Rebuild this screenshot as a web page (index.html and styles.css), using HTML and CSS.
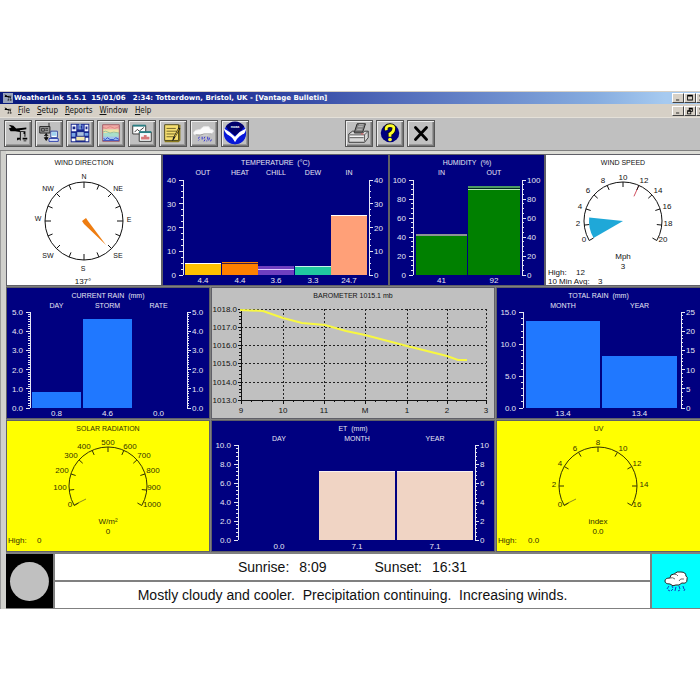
FILE: index.html
```html
<!DOCTYPE html>
<html lang="en">
<head>
<meta charset="utf-8">
<title>WeatherLink 5.5.1</title>
<link rel="stylesheet" href="styles.css">
</head>
<body>
<svg class="defs" aria-hidden="true">
  <symbol id="station" viewBox="0 0 28 27">
    <path d="M4 4l5 1 3 3 11-1v2l-7 1v1h6v1h-5v9h-1v-9l-5-1-5 0-2-3 3-1zM13 18h3v2h-1l-2 1zM19 18h5v2h-5zM20 21h3v1h-3zM20 12h2v5h-1v-3h-1z" fill="#000"/>
  </symbol>
</svg>
<main class="window">
  <header class="titlebar">
    <svg class="app-icon"><use href="#station"/></svg>
    <h1>WeatherLink 5.5.1&nbsp; 15/01/06&nbsp;&nbsp; 2:34: Totterdown, Bristol, UK - [Vantage Bulletin]</h1>
    <div class="controls">
      <button aria-label="Minimize"><svg viewBox="0 0 11 10"><path d="M3 7h4v1H3z"/></svg></button>
      <button aria-label="Maximize"><svg viewBox="0 0 11 10"><path d="M2 1h7v7H2zM3 3v4h5V3z" fill-rule="evenodd"/></svg></button>
      <button aria-label="Close"><svg viewBox="0 0 11 10"><path d="M2 2l6 6M8 2l-6 6" stroke="#000"/></svg></button>
    </div>
  </header>
  <nav class="menubar">
    <svg class="app-icon"><use href="#station"/></svg>
    <a href="#file"><u>F</u>ile</a>
    <a href="#setup"><u>S</u>etup</a>
    <a href="#reports"><u>R</u>eports</a>
    <a href="#window"><u>W</u>indow</a>
    <a href="#help"><u>H</u>elp</a>
    <div class="controls">
      <button aria-label="Minimize bulletin"><svg viewBox="0 0 11 10"><path d="M3 7h4v1H3z"/></svg></button>
      <button aria-label="Restore bulletin"><svg viewBox="0 0 11 10"><path d="M4 1h5v5H7v3H2V4h2zM5 3v1h2v1h1V3zM3 6v2h3V6z" fill-rule="evenodd"/></svg></button>
      <button aria-label="Close bulletin"><svg viewBox="0 0 11 10"><path d="M2 2l6 6M8 2l-6 6" stroke="#000"/></svg></button>
    </div>
  </nav>
  <div class="toolbar">
    <div class="group">
      <button aria-label="Station"><svg viewBox="0 0 28 27"><use href="#station" width="28" height="27"/></svg></button>
      <button aria-label="Download"><svg viewBox="0 0 28 27">
        <path d="M4 6h11v7H4z" fill="#999" stroke="#222"/><path d="M14 2v4" stroke="#222"/>
        <path d="M6 8h3v3H6zM10 8h3M10 10h3" fill="none" stroke="#333"/>
        <path d="M11 13v6M9 16l2-2 2 2M9 18l2 3 2-3z" fill="#111" stroke="#111"/>
        <path d="M16 11h7v7h-7z" fill="#fff" stroke="#223c9b"/><path d="M17 12h5v4h-5z" fill="#9ed2f0"/>
        <path d="M14 19h10v3H14z" fill="#e8eefc" stroke="#2336ac"/>
      </svg></button>
      <button aria-label="Bulletin"><svg viewBox="0 0 28 27">
        <path d="M4 3h20v20H4z" fill="#17268c"/>
        <path d="M5 4h5v7H5zM19 4h4v7h-4z" fill="#f4f6ff"/><path d="M11 4h7v5h-7z" fill="#5a70cc"/>
        <path d="M6 6h3v3H6zM20 6h2v3h-2zM13 5h3v3h-3z" fill="#17268c"/><path d="M14 3v6" stroke="#cfe"/>
        <path d="M5 13h4v4H5zM19 13h4v3h-4z" fill="#78a5e6"/><path d="M11 12h7v4h-7z" fill="#a9c0dd"/>
        <path d="M10 17h9v4h-9z" fill="#f2e7ac"/><path d="M5 19h4v3H5zM20 18h3v4h-3z" fill="#fff"/>
      </svg></button>
      <button aria-label="Strip chart"><svg viewBox="0 0 28 27">
        <path d="M5 4h18v5H5z" fill="#f1aaa5"/><path d="M5 9h18v4H5z" fill="#efe3a5"/>
        <path d="M5 13h18v4H5z" fill="#a8dfcb"/><path d="M5 17h18v5H5z" fill="#9fc2ef"/>
        <path d="M5 7l4 1 4-2 5 2 5-2" fill="none" stroke="#dd8a84"/>
        <path d="M5 12l3-1 5 2 4-1 6 1" fill="none" stroke="#8fc0a0"/>
        <path d="M6 19l2 1 2-2 3 2 4 0 2-2 4 2M5 21h18" fill="none" stroke="#304bc4"/>
        <path d="M5 4h18v18H5z" fill="none" stroke="#a05b66"/>
      </svg></button>
      <button aria-label="Plot"><svg viewBox="0 0 28 27">
        <path d="M4 5h14v9H4z" fill="#fff" stroke="#333"/><path d="M4 5h14" stroke="#287f84" stroke-width="2"/>
        <path d="M6 12l3-3 2 2 5-4" fill="none" stroke="#333"/>
        <path d="M11 12h13v10H11z" fill="#f4fafa" stroke="#333"/><path d="M11 12h13" stroke="#287f84" stroke-width="2"/>
        <path d="M13 20v-3h3v-2h3v2h3v3z" fill="#d77878"/>
      </svg></button>
      <button aria-label="Notes"><svg viewBox="0 0 28 27">
        <path d="M6 4h16v17l-2 2H5V6z" fill="#8a7a1c"/><path d="M5 4h15v17H5z" fill="#f6df70" stroke="#4d4720"/>
        <path d="M7 8h10M7 11h11M7 14h9M7 17h8" stroke="#6a5f25"/>
        <path d="M22 8l-7 12-2 2 1-4 6-11z" fill="#1b1b1b"/><path d="M20 9l-4 8" stroke="#d8b432"/>
      </svg></button>
      <button aria-label="Forecast"><svg viewBox="0 0 28 27">
        <path d="M4 15q-3-2 1-5l5-1q3-4 7-3 3-1 4 3 4 0 3 3-2 3-6 3H9z" fill="#fafafa" stroke="#e2e2e2"/>
        <path d="M5 15q5 1 9-1l8 0" fill="none" stroke="#8f8f8f"/>
        <path d="M9 17l-1 2M12 17v3M15 17l-1 2M18 17v3M20 18l-1 3M9 20l-1 1M15 20l-1 2M22 20l-1 2M17 21v1" stroke="#2a2ad6"/>
      </svg></button>
      <button aria-label="NOAA"><svg viewBox="0 0 28 27">
        <circle cx="14" cy="13" r="12" fill="#0818d8"/><path d="M4 6a12 12 0 0 1 20 0l-3 4-7 6-7-6z" fill="#00006c"/>
        <path d="M2 8l6 4 6 5 5-5 7-4q-1 6-5 9l-7 7q-2-6-6-8-5-3-6-8z" fill="#fff"/>
        <path d="M2 14q7 1 12 9 4-8 12-10-1 12-12 12Q3 24 2 14z" fill="#0818d8"/>
        <text x="14" y="8" class="noaa">noaa</text>
      </svg></button>
    </div>
    <div class="group">
      <button aria-label="Print"><svg viewBox="0 0 28 27">
        <path d="M9 12l3-9h9l-3 9z" fill="#858585" stroke="#222"/><path d="M14 4h5M13 6h5M12 9h5" stroke="#bbb"/>
        <path d="M3 14l4-3h2v2h9l2-2h4v7l-4 5H3z" fill="#d8d8d8" stroke="#333"/>
        <path d="M4 15h16l4-4M20 15v7M4 18h15" fill="none" stroke="#555"/><path d="M4 16h15v1H4z" fill="#fff"/><path d="M16 14h3" stroke="#d55"/>
      </svg></button>
      <button aria-label="Help"><svg viewBox="0 0 28 27">
        <ellipse cx="14" cy="13" rx="10" ry="10" fill="#00007e"/>
        <path d="M10 10q-1-5 4-5t4 4q0 3-4 5v3" fill="none" stroke="#111" stroke-width="5"/>
        <path d="M10 10q-1-5 4-5t4 4q0 3-4 5v3" fill="none" stroke="#ffff28" stroke-width="3"/>
        <circle cx="14" cy="20" r="2" fill="#ffff28"/>
      </svg></button>
      <button aria-label="Exit"><svg viewBox="0 0 28 27"><path d="M8 7l12 13M20 7L8 20" stroke="#000" stroke-width="3" stroke-linecap="round"/></svg></button>
    </div>
  </div>
  <div class="workspace">
    <div class="row row-top">
      <section class="panel white" data-chart="windDirection"><h2>WIND DIRECTION</h2></section>
      <section class="panel navy" data-chart="temperature"><h2>TEMPERATURE&nbsp; (°C)</h2></section>
      <section class="panel navy" data-chart="humidity"><h2>HUMIDITY&nbsp; (%)</h2></section>
      <section class="panel white" data-chart="windSpeed"><h2>WIND SPEED</h2></section>
    </div>
    <div class="row">
      <section class="panel navy" data-chart="currentRain"><h2>CURRENT RAIN&nbsp; (mm)</h2></section>
      <section class="panel gray" data-chart="barometer"><h2>BAROMETER 1015.1 mb</h2></section>
      <section class="panel navy" data-chart="totalRain"><h2>TOTAL RAIN&nbsp; (mm)</h2></section>
    </div>
    <div class="row">
      <section class="panel yellow" data-chart="solar"><h2>SOLAR RADIATION</h2></section>
      <section class="panel navy" data-chart="et"><h2>ET&nbsp; (mm)</h2></section>
      <section class="panel yellow" data-chart="uv"><h2>UV</h2></section>
    </div>
    <footer class="summary">
      <div class="moon"><svg viewBox="0 0 47 54"><circle cx="23.5" cy="27.5" r="19.5" fill="#c0c0c0"/></svg></div>
      <div class="messages">
        <p class="sun"><span>Sunrise:</span><span>8:09</span><span class="set">Sunset:</span><span>16:31</span></p>
        <p>Mostly cloudy and cooler.&nbsp; Precipitation continuing.&nbsp; Increasing winds.</p>
      </div>
      <div class="outlook"><svg viewBox="0 0 48 54">
        <path d="M18 30q-5 0-5-3 0-3 5-3 0-4 4-4 3-3 7-2 5 0 5 4 2 1 1 4 0 4-5 3-3 3-6 2-3 2-6-1z" fill="#fff" stroke="#222"/>
        <path d="M18 24q3-1 5 1M22 20q3 0 4 2M27 27q1-3 5-2" fill="none" stroke="#666"/>
        <path d="M17 32l-2 3M20 32l1 2M21 35l-2 2M24 33l-1 4M27 32l1 3M28 36l-2 1M31 32l1 3M33 35l-1 2M16 36l2 1" fill="none" stroke="#123fc4"/>
      </svg></div>
    </footer>
  </div>
</main>
<script src="charts.js"></script>
</body>
</html>
```
FILE: styles.css
```css
* { box-sizing: border-box; }
body {
  margin: 0;
  padding-top: 91px;
  background: #fff;
  font-family: "Liberation Sans", Arial, sans-serif;
  color: #111;
}
h1, h2, p { margin: 0; }
.defs { position: absolute; width: 0; height: 0; }
.window { border-top: 1px solid #d6d0c6; background: #c0c0c0; overflow: hidden; }

.titlebar, .menubar { display: flex; align-items: center; padding-left: 3px; }
.titlebar {
  height: 12px;
  background: linear-gradient(90deg, #0a1a7c 0, #1c2c92 30%, #4f68b8 55%, #86acdf 85%, #a6caf0 95%);
  color: #fff;
}
.titlebar h1 {
  font: bold 7px/10px "DejaVu Sans", Verdana, sans-serif;
  white-space: nowrap;
}
.app-icon { width: 10px; height: 10px; margin-right: 1px; flex: none; }
.titlebar .app-icon { background: #9aa4bb; }
.menubar {
  height: 14px;
  gap: 7px;
  background: #d6d0c6;
  border-bottom: 1px solid #e4e0d8;
  font: 8px/12px "DejaVu Sans Condensed", "DejaVu Sans", sans-serif;
}
.menubar .app-icon { margin-right: -2px; }
.menubar a { color: #111; text-decoration: none; }
.controls { display: flex; width: 28px; margin-left: auto; overflow: hidden; }
.controls button {
  flex: none;
  width: 12px;
  height: 10px;
  padding: 0;
  border: 1px solid;
  border-color: #fff #444 #444 #fff;
  background: #d6d0c6;
}
.controls svg { display: block; width: 10px; height: 8px; }

.toolbar {
  display: flex;
  gap: 96px;
  padding: 2px 4px 3px;
  border-bottom: 1px solid #808080;
  background: #c0c0c0;
}
.group { display: flex; gap: 3px; }
.group button {
  width: 28px;
  height: 27px;
  padding: 0;
  border: 1px solid #555;
  background: #c0c0c0;
  box-shadow: inset 1px 1px #eee, inset -1px -1px #777, inset -2px -2px #999;
}
.group svg { display: block; width: 100%; height: 100%; }
.noaa { font: bold 4px "Liberation Sans", sans-serif; fill: #fff; text-anchor: middle; }

.workspace {
  display: grid;
  gap: 3px;
  padding: 4px 0 1px 6px;
  border-left: 1px solid #9a9a9a;
  background: linear-gradient(#dcdcd6 0, #dcdcd6 3px, #808080 3px);
  box-shadow: inset 5px 0 #d0d0cc;
}
.row {
  display: grid;
  grid-template-columns: 202fr 282fr 203fr;
  gap: 3px;
}
.row-top { grid-template-columns: 154fr 225fr 154fr 154fr; gap: 2px; }
.panel { min-width: 0; outline: 1px solid #606068; }
.panel h2 {
  padding-top: 4px;
  font-size: 7px;
  font-weight: normal;
  line-height: 8px;
  text-align: center;
}
.panel svg { display: block; width: 100%; height: auto; }
.white { background: #fff; }
.navy { background: #000080; color: #e6e6f4; }
.gray { background: #c0c0c0; }
.yellow { background: #ff0; color: #333300; }

.panel text { fill: currentColor; font-size: 8px; }
.panel text.head { font-size: 7px; }
.mid { text-anchor: middle; }
.end { text-anchor: end; }
.line { fill: none; stroke: currentColor; }
.grid { fill: none; stroke: #222; stroke-dasharray: 2 2; shape-rendering: crispEdges; }
.axis { fill: none; stroke: currentColor; shape-rendering: crispEdges; }
.trace { fill: none; stroke: #f8f840; stroke-width: 2; }

.summary {
  display: grid;
  grid-template-columns: 47fr 596fr 48fr;
  gap: 2px;
  margin-left: -1px;
}
.summary > div { min-width: 0; }
.summary svg { display: block; width: 100%; height: 100%; }
.moon { background: #000; }
.outlook { background: #0ff; }
.messages { display: grid; gap: 2px; }
.messages p {
  background: #fff;
  font-size: 14px;
  line-height: 26px;
  text-align: center;
  white-space: nowrap;
}
.sun { display: flex; justify-content: center; gap: 10px; }
.sun .set { margin-left: 38px; }
```
FILE: charts.js
```js
const text = (x, y, value, cls = "") => `<text x="${x}" y="${y}" class="${cls}">${value}</text>`;
const path = (d, cls) => `<path d="${d}" class="${cls}"/>`;
const rect = (x, y, w, h, fill) => `<rect x="${x}" y="${y}" width="${w}" height="${h}" fill="${fill}"/>`;

function axis(x, dir, labels, minor, top, bottom) {
  const steps = (labels.length - 1) * minor;
  let d = `M${x} ${top}V${bottom}`;
  for (let i = 0; i <= steps; i++) {
    const y = top + (bottom - top) * i / steps;
    d += `M${x} ${y}h${dir * (i % minor ? 2 : 4)}`;
  }
  let out = path(d, "axis");
  labels.forEach((label, i) => {
    const y = top + (bottom - top) * i / (labels.length - 1) + 3;
    out += text(x + dir * (dir < 0 ? 7 : 5), y, label, dir < 0 ? "end" : "");
  });
  return out;
}

function bars(c) {
  let out = "";
  for (const b of c.bars) {
    if (b.y) out += rect(b.x, b.y, b.w, c.bottom - b.y, b.fill);
    for (const [y, h, fill] of b.marks || []) out += rect(b.x, y, b.w, h, fill);
    const mid = b.x + b.w / 2;
    out += text(mid, 20, b.label, "head mid") + text(mid, 128, b.value, "mid");
  }
  out += axis(c.left, -1, c.leftLabels, c.leftMinor, c.top, c.bottom);
  return out + axis(c.right, 1, c.rightLabels, c.rightMinor, c.top, c.bottom);
}

function polar(cx, cy, r, deg) {
  const a = deg * Math.PI / 180;
  return `${(cx + r * Math.sin(a)).toFixed(2)} ${(cy - r * Math.cos(a)).toFixed(2)}`;
}

function gauge(c) {
  const { cx, cy, r } = c;
  const n = c.labels.length - 1;
  let d = `M${polar(cx, cy, r, 240)}A${r} ${r} 0 1 1 ${polar(cx, cy, r, 120)}`;
  let out = c.under || "";
  c.labels.forEach(([label, x, y], i) => {
    const deg = 240 + 240 * i / n;
    d += `M${polar(cx, cy, r, deg)}L${polar(cx, cy, r - 5, deg)}`;
    out += text(x, y + 3, label, "mid");
  });
  out += path(d, "line") + text(cx, c.unitY, c.unit, "mid") + text(cx, c.unitY + 10, c.value, "mid");
  for (const [x, y, s] of c.notes) out += text(x, y, s);
  return out;
}

function compass() {
  const cx = 77, cy = 66, r = 39;
  let d = "";
  for (let i = 0; i < 16; i++) {
    d += `M${polar(cx, cy, r, i * 22.5)}L${polar(cx, cy, r - (i % 4 ? 5 : 6), i * 22.5)}`;
  }
  let out = `<circle cx="${cx}" cy="${cy}" r="${r}" class="line"/>` + path(d, "line");
  [["N", 77, 24], ["NE", 111, 36], ["E", 122, 67], ["SE", 111, 103], ["S", 76, 116],
   ["SW", 41, 103], ["W", 31, 66], ["NW", 41, 36], ["137°", 76, 129]]
    .forEach(([s, x, y]) => { out += text(x, y, s, s === "137°" ? "mid" : "head mid"); });
  return out + `<path d="M75 66l4-3 2 3 18 24-22-21z" fill="#ee7d11"/>`;
}

function barometer() {
  const xs = [29, 71, 112, 153, 195, 235, 274];
  const ys = [21, 39, 57, 75, 94, 112];
  let grid = "", ticks = "M29 21V112H274", out = "";
  xs.forEach((x, i) => {
    if (i) grid += `M${x} 21V112`;
    ticks += `M${x} 112v4`;
    if (i < 6) for (let k = 1; k < 4; k++) ticks += `M${x + (xs[i + 1] - x) * k / 4} 112v2`;
    out += text(x, 125, ["9", "10", "11", "M", "1", "2", "3"][i], "mid");
  });
  ys.forEach((y, i) => {
    if (i < 5) {
      grid += `M29 ${y}H274`;
      for (let k = 1; k < 5; k++) ticks += `M29 ${y + (ys[i + 1] - y) * k / 5}h-2`;
    }
    ticks += `M29 ${y}h-3`;
    out += text(25, y + 3, (1018 - i).toFixed(1), "end");
  });
  return out + path(grid, "grid") + path(ticks, "axis") +
    path("M28 22L51 23L71 30L90 35L113 37L134 43L153 47L195 58L235 68L246 72L255 72", "trace");
}

const arcLabels = (names, points) => names.map((s, i) => [s, ...points[i]]);

const charts = {
  windDirection: [154, 130, compass],
  temperature: [225, 130, () => bars({
    left: 20, right: 206, top: 25, bottom: 120, leftMinor: 4, rightMinor: 4,
    leftLabels: [40, 30, 20, 10, 0], rightLabels: [40, 30, 20, 10, 0],
    bars: [
      { label: "OUT", value: "4.4", x: 22, w: 36, y: 108, fill: "#ffc000", marks: [[108, 1, "#fff"]] },
      { label: "HEAT", value: "4.4", x: 59, w: 36, y: 107, fill: "#ff8000", marks: [[108, 1, "#402040"]] },
      { label: "CHILL", value: "3.6", x: 95, w: 36, y: 111, fill: "#6f3fc0", marks: [[114, 1, "#e0d0ff"]] },
      { label: "DEW", value: "3.3", x: 132, w: 36, y: 111, fill: "#20c8a0", marks: [[111, 1, "#c8f4e8"]] },
      { label: "IN", value: "24.7", x: 168, w: 36, y: 60, fill: "#ffa078", marks: [[60, 1, "#fff"]] }
    ]
  })],
  humidity: [154, 130, () => bars({
    left: 23, right: 132, top: 25, bottom: 120, leftMinor: 4, rightMinor: 4,
    leftLabels: [100, 80, 60, 40, 20, 0], rightLabels: [100, 80, 60, 40, 20, 0],
    bars: [
      { label: "IN", value: "41", x: 26, w: 51, y: 79, fill: "#008000", marks: [[79, 2, "#8c9494"]] },
      { label: "OUT", value: "92", x: 78, w: 52, y: 31, fill: "#008000", marks: [[31, 2, "#4c9a62"], [33, 1, "#002a20"], [34, 1, "#b8e8b8"]] }
    ]
  })],
  windSpeed: [154, 130, () => gauge({
    cx: 77, cy: 66, r: 39, unit: "Mph", unitY: 104, value: "3",
    labels: arcLabels([0, 2, 4, 6, 8, 10, 12, 14, 16, 18, 20],
      [[38, 84], [32, 68], [34, 51], [42, 35], [57, 25], [77, 22], [98, 25], [112, 35], [121, 51], [122, 68], [117, 84]]),
    under: `<path d="M77 66L${polar(77, 66, 34, 240)}A34 34 0 0 1 ${polar(77, 66, 34, 276)}z" fill="#1fa8d8"/>` +
      `<path d="M${polar(77, 66, 38, 24)}L${polar(77, 66, 27, 24)}" stroke="#d05060"/>`,
    notes: [[2, 120, "High:"], [30, 120, "12"], [2, 129, "10 Min Avg:"], [52, 129, "3"]]
  })],
  currentRain: [202, 130, () => bars({
    left: 23, right: 180, top: 24, bottom: 120, leftMinor: 8, rightMinor: 8,
    leftLabels: ["5.0", "4.0", "3.0", "2.0", "1.0", "0.0"], rightLabels: ["5.0", "4.0", "3.0", "2.0", "1.0", "0.0"],
    bars: [
      { label: "DAY", value: "0.8", x: 25, w: 49, y: 104, fill: "#2078ff" },
      { label: "STORM", value: "4.6", x: 76, w: 49, y: 31, fill: "#2078ff" },
      { label: "RATE", value: "0.0", x: 127, w: 49 }
    ]
  })],
  barometer: [282, 130, barometer],
  totalRain: [203, 130, () => bars({
    left: 26, right: 184, top: 24, bottom: 120, leftMinor: 5, rightMinor: 5,
    leftLabels: ["15.0", "10.0", "5.0", "0.0"], rightLabels: [25, 20, 15, 10, 5, 0],
    bars: [
      { label: "MONTH", value: "13.4", x: 29, w: 74, y: 33, fill: "#2078ff" },
      { label: "YEAR", value: "13.4", x: 105, w: 75, y: 68, fill: "#2078ff" }
    ]
  })],
  solar: [202, 130, () => gauge({
    cx: 101, cy: 65, r: 39, unit: "W/m²", unitY: 103, value: "0",
    labels: arcLabels([0, 100, 200, 300, 400, 500, 600, 700, 800, 900, 1000],
      [[63, 83], [53, 66], [55, 49], [64, 34], [77, 25], [101, 21], [123, 25], [137, 34], [146, 49], [147, 66], [145, 83]]),
    under: `<path d="M67 84l12-6" stroke="#8a8a20"/>`,
    notes: [[1, 122, "High:"], [30, 122, "0"]]
  })],
  et: [282, 130, () => bars({
    left: 26, right: 263, top: 24, bottom: 119, leftMinor: 5, rightMinor: 5,
    leftLabels: ["10.0", "8.0", "6.0", "4.0", "2.0", "0.0"], rightLabels: [10, 8, 6, 4, 2, 0],
    bars: [
      { label: "DAY", value: "0.0", x: 29, w: 76 },
      { label: "MONTH", value: "7.1", x: 107, w: 76, y: 50, fill: "#f0d4c4", marks: [[50, 1, "#f8f0f0"]] },
      { label: "YEAR", value: "7.1", x: 185, w: 76, y: 50, fill: "#f0d4c4", marks: [[50, 1, "#f8f0f0"]] }
    ]
  })],
  uv: [203, 130, () => gauge({
    cx: 101, cy: 65, r: 39, unit: "index", unitY: 103, value: "0.0",
    labels: arcLabels([0, 2, 4, 6, 8, 10, 12, 14, 16],
      [[63, 83], [57, 63], [63, 42], [78, 27], [101, 21], [126, 27], [140, 42], [147, 63], [140, 83]]),
    under: `<path d="M67 84l12-6" stroke="#8a8a20"/>`,
    notes: [[1, 122, "High:"], [31, 122, "0.0"]]
  })]
};

const TITLE_HEIGHT = 12;
document.querySelectorAll("[data-chart]").forEach(panel => {
  const [w, h, draw] = charts[panel.dataset.chart];
  panel.insertAdjacentHTML("beforeend",
    `<svg viewBox="0 ${TITLE_HEIGHT} ${w} ${h - TITLE_HEIGHT}">${draw()}</svg>`);
});
```
